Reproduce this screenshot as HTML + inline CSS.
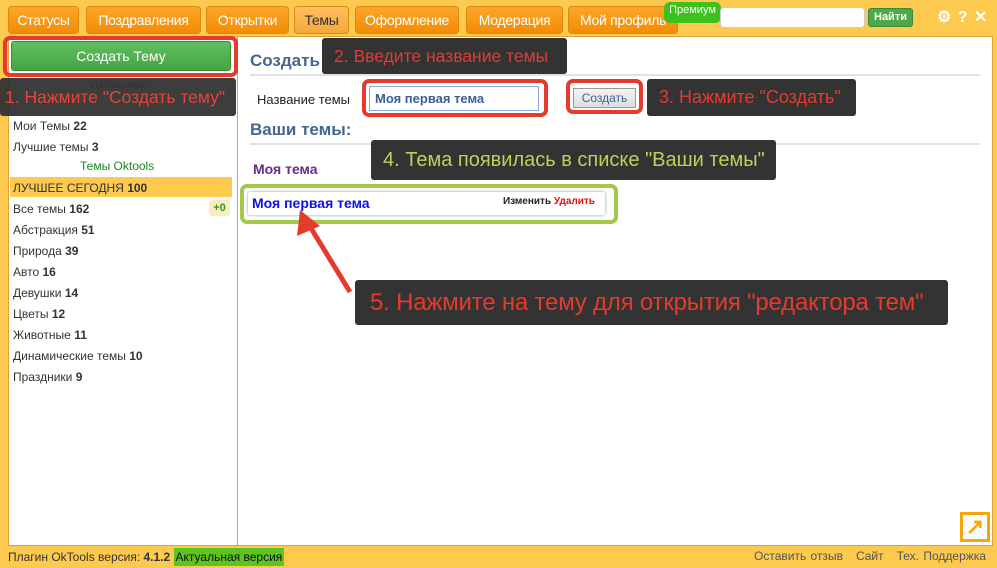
<!DOCTYPE html>
<html><head><meta charset="utf-8"><style>
*{box-sizing:border-box;margin:0;padding:0}
body{width:997px;height:568px;background:#fdc94f;font-family:"Liberation Sans",sans-serif;position:relative;overflow:hidden;font-size:13px}
.a{position:absolute}
.tab{position:absolute;top:6px;height:28px;border:1px solid #d98a10;border-radius:4px;background:linear-gradient(#fca62a,#f48c05);color:#fff;font-size:14px;line-height:26px;text-align:center;letter-spacing:-0.3px}
.tab.on{background:linear-gradient(#fcc060,#f7a83a);color:#333}
.panel{background:#fff;border:1px solid #dea03a}
.note{position:absolute;background:#333;border-radius:3px;color:#e53a2e;font-size:17px;white-space:nowrap;font-family:"Liberation Sans",sans-serif}
.red{position:absolute;border:4px solid #e53a2e;border-radius:7px}
.li{position:absolute;left:13px;font-size:12px;color:#333}
.li b{color:#333}
</style></head><body>
<div class="tab" style="left:8px;width:71px">Статусы</div>
<div class="tab" style="left:86px;width:115px">Поздравления</div>
<div class="tab" style="left:206px;width:83px">Открытки</div>
<div class="tab on" style="left:294px;width:55px">Темы</div>
<div class="tab" style="left:355px;width:104px">Оформление</div>
<div class="tab" style="left:466px;width:97px">Модерация</div>
<div class="tab" style="left:568px;width:110px">Мой профиль</div>
<div class="a" style="left:664px;top:2px;width:57px;height:21px;background:#3dc21b;border-radius:6px;color:#fff;font-size:11px;line-height:17px;text-align:center">Премиум</div>
<div class="a" style="left:720px;top:7px;width:145px;height:21px;background:#fff;border:1px solid #ccc;border-radius:4px"></div>
<div class="a" style="left:868px;top:8px;width:45px;height:19px;background:#4ea84a;border:1px solid #3a8a36;border-radius:3px;color:#fff;font-size:11px;font-weight:bold;line-height:17px;text-align:center">Найти</div>
<div class="a" style="left:937px;top:7px;color:#fff;font-size:16px;font-weight:bold;word-spacing:2px">⚙ ? ✕</div>

<div class="a panel" style="left:8px;top:36px;width:230px;height:510px"></div>
<div class="a panel" style="left:237px;top:36px;width:756px;height:510px"></div>

<div class="a" style="left:11px;top:41px;width:220px;height:30px;background:linear-gradient(#5fbf5e,#45a545);border:1px solid #3a8a3a;border-radius:3px;color:#fff;font-size:14px;line-height:28px;text-align:center">Создать Тему</div>
<div class="red" style="left:3px;top:36px;width:235px;height:41px"></div>
<div class="a" style="left:90px;top:79px;font-size:11px;color:#333">Избранное</div>
<div class="note" style="left:0;top:78px;width:236px;height:38px;line-height:38px;padding-left:5px;opacity:.95;font-size:17.5px">1. Нажмите "Создать тему"</div>
<div class="li" style="top:119px">Мои Темы <b>22</b></div>
<div class="li" style="top:140px">Лучшие темы <b>3</b></div>
<div class="a" style="left:80px;top:159px;font-size:12px;color:#1a8a1a">Темы Oktools</div>
<div class="a" style="left:10px;top:177px;width:222px;height:20px;background:#fdc94f"></div>
<div class="li" style="top:181px">ЛУЧШЕЕ СЕГОДНЯ <b>100</b></div>
<div class="li" style="top:202px">Все темы <b>162</b></div>
<div class="a" style="left:209px;top:200px;width:21px;height:16px;background:#fdebc0;border-radius:3px;color:#2a9a2a;font-size:11px;font-weight:bold;text-align:center;line-height:16px">+0</div>
<div class="li" style="top:223px">Абстракция <b>51</b></div>
<div class="li" style="top:244px">Природа <b>39</b></div>
<div class="li" style="top:265px">Авто <b>16</b></div>
<div class="li" style="top:286px">Девушки <b>14</b></div>
<div class="li" style="top:307px">Цветы <b>12</b></div>
<div class="li" style="top:328px">Животные <b>11</b></div>
<div class="li" style="top:349px">Динамические темы <b>10</b></div>
<div class="li" style="top:370px">Праздники <b>9</b></div>

<div class="a" style="left:250px;top:51px;font-size:17px;font-weight:bold;color:#44668f">Создать новую тему:</div>
<div class="a" style="left:250px;top:74px;width:730px;height:2px;background:#dde3ea"></div>
<div class="note" style="left:322px;top:38px;width:245px;height:36px;line-height:36px;padding-left:12px;font-size:17.5px">2. Введите название темы</div>
<div class="a" style="left:257px;top:92px;font-size:13px;color:#222">Название темы</div>
<div class="a" style="left:369px;top:86px;width:170px;height:25px;border:1px solid #8aa8d8;color:#3a5f9a;font-size:13px;font-weight:bold;line-height:23px;padding-left:5px;background:#fff">Моя первая тема</div>
<div class="red" style="left:362px;top:79px;width:186px;height:38px"></div>
<div class="a" style="left:573px;top:88px;width:63px;height:20px;background:linear-gradient(#f4f4f4,#ddd);border:1px solid #999;color:#3a5f9a;font-size:12px;line-height:18px;text-align:center">Создать</div>
<div class="red" style="left:566px;top:79px;width:77px;height:35px"></div>
<div class="note" style="left:647px;top:79px;width:209px;height:37px;line-height:37px;padding-left:12px;font-size:18px">3. Нажмите "Создать"</div>
<div class="a" style="left:250px;top:120px;font-size:17px;font-weight:bold;color:#44668f">Ваши темы:</div>
<div class="a" style="left:250px;top:143px;width:730px;height:2px;background:#dde3ea"></div>
<div class="a" style="left:253px;top:161px;font-size:14px;font-weight:bold;color:#6a2a8a">Моя тема</div>
<div class="note" style="left:371px;top:140px;width:405px;height:40px;line-height:40px;padding-left:12px;color:#b5d45a;font-size:20px">4. Тема появилась в списке "Ваши темы"</div>
<div class="a" style="left:240px;top:184px;width:378px;height:40px;border:4px solid #a5c84a;border-radius:7px"></div>
<div class="a" style="left:248px;top:192px;width:357px;height:23px;background:#fff;box-shadow:0 0 3px #999;border-radius:2px"></div>
<div class="a" style="left:252px;top:195px;font-size:14px;font-weight:bold;color:#1010e0">Моя первая тема</div>
<div class="a" style="left:503px;top:196px;font-size:10px;font-weight:bold;color:#222">Изменить <span style="color:#e01010">Удалить</span></div>
<svg class="a" style="left:280px;top:200px" width="90" height="100"><line x1="70" y1="92" x2="26" y2="20" stroke="#e53a2e" stroke-width="5"/><polygon points="20,10 17,36 40,26" fill="#e53a2e"/></svg>
<div class="note" style="left:355px;top:280px;width:593px;height:45px;line-height:45px;padding-left:15px;font-size:24px;letter-spacing:-0.2px">5. Нажмите на тему для открытия "редактора тем"</div>
<div class="a" style="left:960px;top:512px;width:30px;height:30px;border:3px solid #f5a60a;color:#f5a60a;font-size:22px;font-weight:bold;line-height:24px;text-align:center">↗</div>
<div class="a" style="left:8px;top:550px;font-size:12px;color:#333">Плагин OkTools версия: <b>4.1.2</b> <span style="background:#5ec41e;color:#111;padding:2px 2px">Актуальная версия</span></div>
<div class="a" style="left:754px;top:549px;font-size:12px;color:#555;word-spacing:1px">Оставить отзыв &nbsp; Сайт &nbsp; Тех. Поддержка</div>
</body></html>
